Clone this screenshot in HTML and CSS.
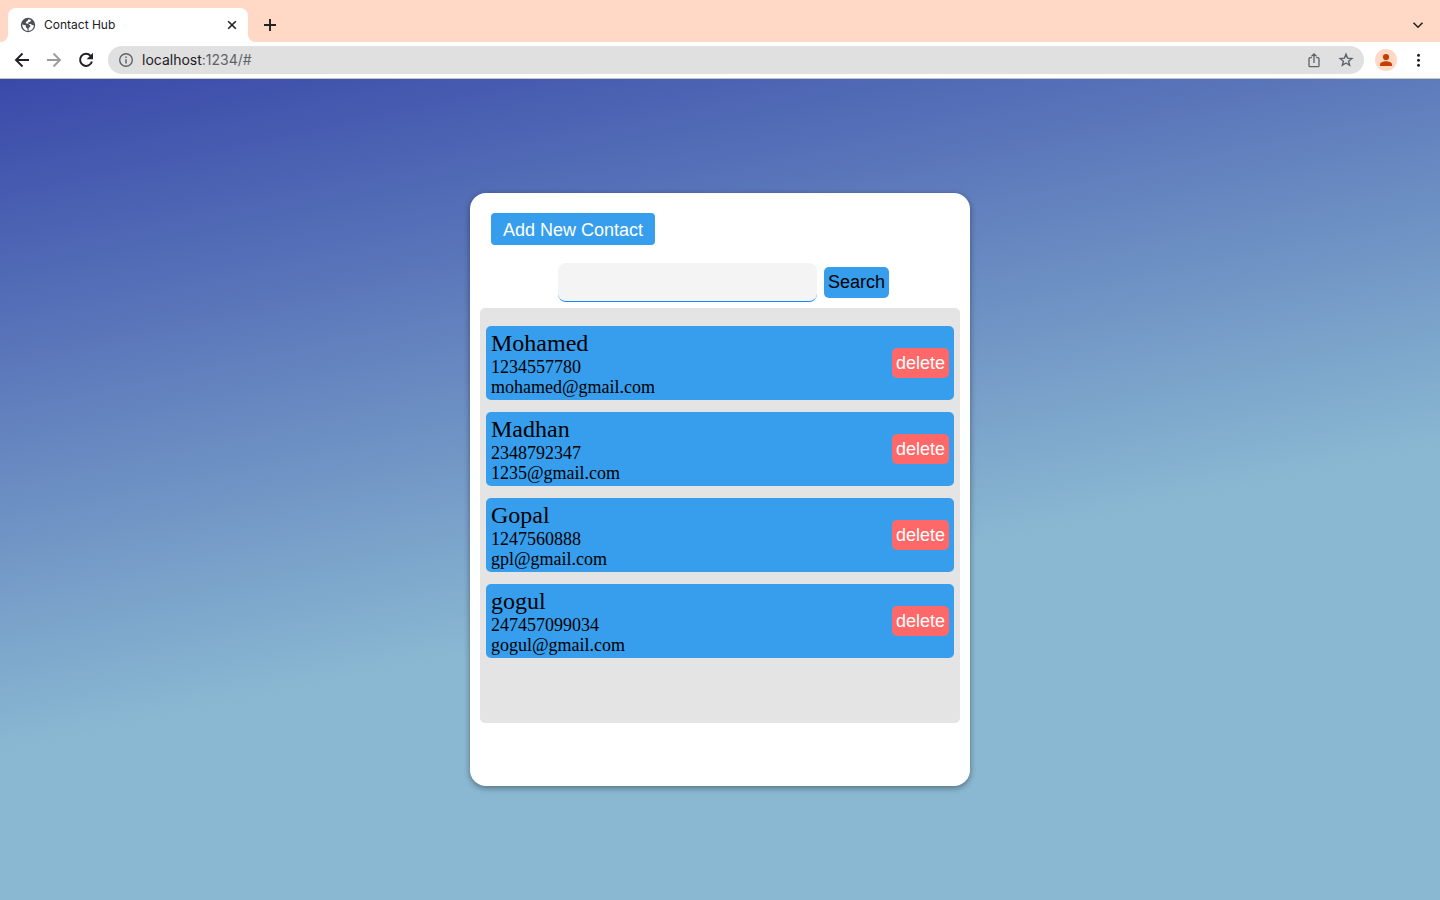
FILE: index.html
```
<!DOCTYPE html>
<html lang="en">
<head>
<meta charset="utf-8">
<title>Contact Hub</title>
<link rel="stylesheet" href="styles.css">
</head>
<body>
<header class="browser">
  <div class="tab-strip">
    <div class="tab">
      <svg class="favicon" width="16" height="16" viewBox="0 0 16 16" aria-hidden="true"><circle cx="8" cy="8" r="7.2" fill="#4d5056"/><path d="M8.4 2.2 7.6 3.7 5.9 5v1.2l2.6.9 1.7 1.1V9.7L8.6 11v2.6h-.8l-.5-2.200-1.500-1.200L6 8.600 2.200 7.400c0 3.600 2.400 6.400 5.800 6.400 3.500 0 5.800-2.500 5.800-5.600L12 8 10.800 6.900H8.700L7.900 5.700l2.600-1.100.5-1.700Z" fill="#fff"/></svg>
      <span class="tab-title">Contact Hub</span>
      <button class="icon-button" type="button" aria-label="Close tab"><svg width="16" height="16" viewBox="0 0 16 16"><path d="m4.200 4.200 7.600 7.600m0-7.600-7.600 7.600" stroke="#202124" stroke-width="1.600"/></svg></button>
    </div>
    <button class="icon-button new-tab" type="button" aria-label="New tab"><svg width="16" height="16" viewBox="0 0 16 16"><path d="M8 2v12M2 8h12" stroke="#202124" stroke-width="1.900"/></svg></button>
    <button class="icon-button tab-search" type="button" aria-label="Search tabs"><svg width="16" height="16" viewBox="0 0 16 16"><path d="m3.500 5.800 4.500 4.400 4.500-4.400" fill="none" stroke="#202124" stroke-width="1.600"/></svg></button>
  </div>
  <div class="toolbar">
    <button class="icon-button" type="button" aria-label="Back"><svg width="16" height="16" viewBox="0 0 16 16"><path d="M15 8H2.500M8.500 1.500 2 8l6.500 6.500" fill="none" stroke="#202124" stroke-width="1.900"/></svg></button>
    <button class="icon-button" type="button" aria-label="Forward"><svg width="16" height="16" viewBox="0 0 16 16"><path d="M1 8h12.500M7.500 1.500 14 8l-6.500 6.500" fill="none" stroke="#9a9b9d" stroke-width="1.900"/></svg></button>
    <button class="icon-button" type="button" aria-label="Reload"><svg width="16" height="16" viewBox="0 0 16 16"><path d="M12.600 3.900A6 6 0 1 0 13.900 9.400" fill="none" stroke="#202124" stroke-width="2"/><path d="M15 .8v6.400H8.600Z" fill="#202124"/></svg></button>
    <div class="address">
      <button class="icon-button" type="button" aria-label="Site information"><svg width="16" height="16" viewBox="0 0 16 16"><circle cx="8" cy="8" r="6.300" fill="none" stroke="#5f6368" stroke-width="1.400"/><path d="M8 7.200v4.200M8 4.400v1.600" stroke="#5f6368" stroke-width="1.500"/></svg></button>
      <span class="url">localhost<span class="url-rest">:1234/#</span></span>
      <button class="icon-button" type="button" aria-label="Share"><svg width="16" height="16" viewBox="0 0 16 16"><path d="M5.800 5.700H4a1 1 0 0 0-1 1v7a1 1 0 0 0 1 1h8a1 1 0 0 0 1-1v-7a1 1 0 0 0-1-1h-1.800M8 11V2M5.400 4.400 8 1.800l2.600 2.600" fill="none" stroke="#5f6368" stroke-width="1.300"/></svg></button>
      <button class="icon-button" type="button" aria-label="Bookmark"><svg width="16" height="16" viewBox="0 0 16 16"><path d="m8 2.200 1.550 3.900 4.350.35-3.300 2.700 1.050 4.150L8 11 4.350 13.300l1.050-4.150-3.300-2.700 4.350-.35Z" fill="none" stroke="#5f6368" stroke-width="1.400"/></svg></button>
    </div>
    <button class="icon-button profile" type="button" aria-label="Profile"><svg width="22" height="22" viewBox="0 0 22 22"><circle cx="11" cy="11" r="11" fill="#ffd9c6"/><circle cx="11" cy="8" r="3.100" fill="#c73e00"/><path d="M5 17v-1.500c0-2.200 3.500-3.200 6-3.200s6 1 6 3.200V17Z" fill="#c73e00"/></svg></button>
    <button class="icon-button" type="button" aria-label="Menu"><svg width="16" height="16" viewBox="0 0 16 16" fill="#202124"><circle cx="8.500" cy="3.200" r="1.500"/><circle cx="8.500" cy="8.200" r="1.500"/><circle cx="8.500" cy="13.200" r="1.500"/></svg></button>
  </div>
</header>
<main class="page">
  <section class="card">
    <button class="add" type="button">Add New Contact</button>
    <form class="search">
      <input class="search-input" type="text" aria-label="Search contacts">
      <button class="search-button" type="button">Search</button>
    </form>
    <ul class="contacts">
      <li class="contact">
        <div><h2 class="name">Mohamed</h2><p class="detail">1234557780</p><p class="detail">mohamed@gmail.com</p></div>
        <button class="delete" type="button">delete</button>
      </li>
      <li class="contact">
        <div><h2 class="name">Madhan</h2><p class="detail">2348792347</p><p class="detail">1235@gmail.com</p></div>
        <button class="delete" type="button">delete</button>
      </li>
      <li class="contact">
        <div><h2 class="name">Gopal</h2><p class="detail">1247560888</p><p class="detail">gpl@gmail.com</p></div>
        <button class="delete" type="button">delete</button>
      </li>
      <li class="contact">
        <div><h2 class="name">gogul</h2><p class="detail">247457099034</p><p class="detail">gogul@gmail.com</p></div>
        <button class="delete" type="button">delete</button>
      </li>
    </ul>
  </section>
</main>
</body>
</html>
```
FILE: styles.css
```
* { box-sizing: border-box; margin: 0; padding: 0; }
body {
  min-height: 100vh;
  display: flex;
  flex-direction: column;
  font-family: "Liberation Serif", "Times New Roman", serif;
  color: #000;
}
button { border: 0; background: none; cursor: pointer; }
svg { display: block; }
.browser { font-family: Inter, sans-serif; color: #202124; background: #fff; border-bottom: 1px solid #c4c4c4; }
.tab-strip { display: flex; align-items: center; height: 42px; padding: 0 14px 0 8px; background: #ffd9c6; }
.tab {
  display: flex;
  align-items: center;
  align-self: flex-end;
  gap: 8px;
  width: 240px;
  height: 34px;
  padding: 0 8px 0 12px;
  border-radius: 8px 8px 0 0;
  background: #fff;
  position: relative;
}
.tab::before, .tab::after { content: ""; position: absolute; bottom: 0; width: 8px; height: 8px; }
.tab::before { right: 100%; background: radial-gradient(circle at 0 0, transparent 8px, #fff 8px); }
.tab::after { left: 100%; background: radial-gradient(circle at 100% 0, transparent 8px, #fff 8px); }
.tab-title { flex: 1; font-size: 12px; line-height: 16px; }
.icon-button { flex: none; }
.new-tab { margin: 8px 0 0 14px; }
.tab-search { margin: 8px 0 0 auto; }
.toolbar { display: flex; align-items: center; gap: 16px; height: 36px; padding: 0 14px; }
.address {
  flex: 1;
  display: flex;
  align-items: center;
  gap: 16px;
  height: 28px;
  margin: 0 -5px 0 -2px;
  padding: 0 10px;
  border-radius: 14px;
  background: #e0e0e0;
}
.url { flex: 1; margin-left: -8px; font-size: 14px; line-height: 20px; }
.url-rest { color: #5f6368; }
.profile { margin-right: -3px; }
.page {
  flex: 1;
  display: flex;
  align-items: center;
  justify-content: center;
  background: linear-gradient(168deg, #3949a9 0%, #8ab8d2 60%);
}
.card {
  width: 500px;
  max-width: 100%;
  padding: 20px 10px 63px;
  border-radius: 16px;
  background: #fff;
  box-shadow: 0 2px 6px rgba(0, 0, 0, 0.4);
}
.add, .search-button, .delete {
  font-family: "Liberation Sans", Arial, sans-serif;
  font-size: 18px;
  line-height: 20px;
  border-radius: 5px;
}
.add { display: block; margin-left: 11px; padding: 7px 12px 5px; color: #fff; background: #369eed; border-radius: 4px; }
.search { display: flex; align-items: center; justify-content: center; gap: 7px; margin: 18px 0 6px 7px; }
.search-input {
  width: 259px;
  height: 39px;
  padding: 0 8px;
  border: 0;
  border-bottom: 1px solid #1089ff;
  border-radius: 8px;
  background: #f4f4f4;
  font-size: 18px;
}
.search-button { padding: 5px 4px 6px; color: #000; background: #369eed; }
.contacts {
  display: flex;
  flex-direction: column;
  gap: 12px;
  min-height: 415px;
  padding: 18px 6px;
  border-radius: 5px;
  background: #e4e4e4;
  list-style: none;
}
.contact {
  display: flex;
  align-items: center;
  justify-content: space-between;
  padding: 3px 5px;
  border-radius: 5px;
  background: #369eed;
}
.name { font-size: 24px; font-weight: 400; line-height: 28px; }
.detail { font-size: 18px; line-height: 20px; }
.delete { padding: 5px 4px; color: #fff; background: #ff6868; }
```
